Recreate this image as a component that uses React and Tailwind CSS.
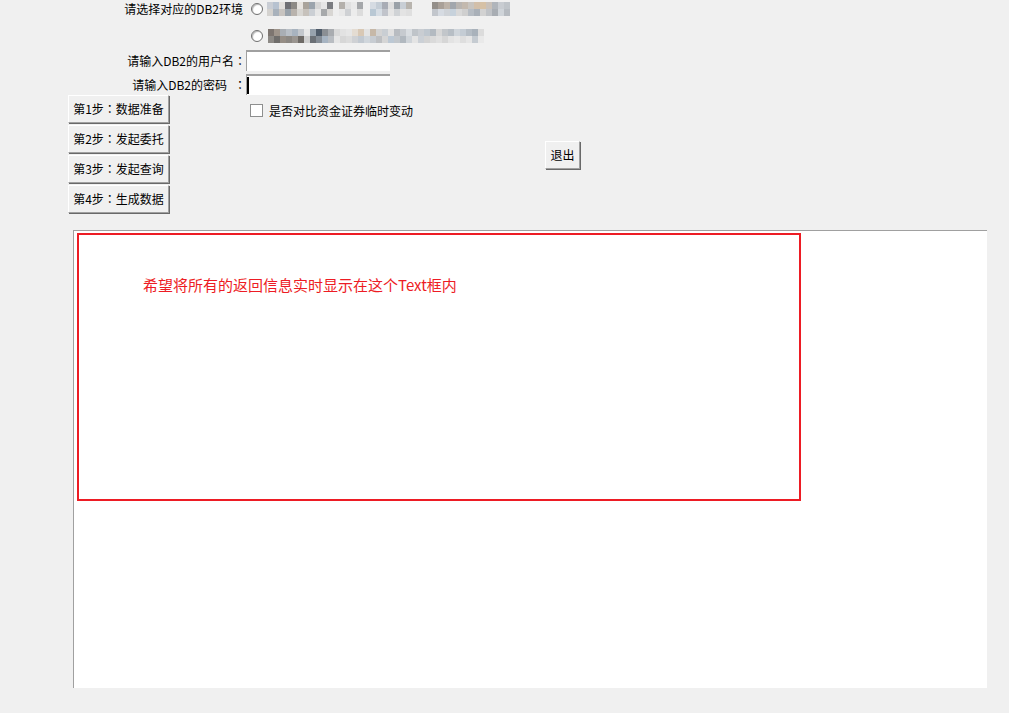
import React from 'react';

const blurRow1 = [
  ['#c9cdd4', '#d4d2cf'], ['#b7c2d0', '#a9b2bc'], ['#e2dfdc', '#c8c4c0'], ['#6f6f74', '#9aa3ab'],
  ['#8d8a86', '#b9b3ad'], ['#e7e4e0', '#d8d6d2'], ['#a9a39b', '#c7c2bc'], ['#9ba4ad', '#cbcfd4'],
  ['#d6d6d6', '#e6e6e6'], ['#e6e6e6', '#a7a9ab'], ['#7a7c80', '#d8d6d3'], ['#eeeeee', '#eeeeee'],
  ['#b4b0ab', '#e8e8e8'], ['#e0e0e0', '#cfd1d4'], ['#e9e9e9', '#ececec'], ['#a5a7aa', '#dcdcdc'],
];
const blurRow1b = [
  ['#d5dbe2', '#b9c8d4'], ['#c4cdd6', '#d6dde4'], ['#a8acb5', '#c1c4cb'], ['#dedede', '#e5e5e5'],
  ['#9aa1a8', '#d0d3d6'], ['#c8ced5', '#e3e3e3'], ['#b8b4ae', '#dfdfdf'],
];
const blurRow1c = [
  ['#948f8a', '#c2c6cc'], ['#a9a098', '#d6dbe2'], ['#bcb2a8', '#cfd3d8'], ['#a2a7ad', '#c7d2dc'],
  ['#b9b5b1', '#d9d9d9'], ['#c3b9ae', '#cfcfcf'], ['#c8c4bf', '#b6bcc3'], ['#d2bfa9', '#a9b0b8'],
  ['#d6c1a5', '#d2d2d2'], ['#c9c1b9', '#c0c3c7'], ['#b0b5bb', '#a8adb3'], ['#c8ccd1', '#cfd4d9'],
  ['#bfc4c9', '#b6bbc1'],
];
const blurRow2 = [
  ['#7d7570', '#8d8a86'], ['#9e948b', '#6f6d6b'], ['#a9aeb4', '#968e86'], ['#b9bfc6', '#8c8883'],
  ['#a8b3bf', '#9a9590'], ['#c3c7cc', '#6e6a66'], ['#e8e8e8', '#d0d0d0'], ['#97a2ad', '#6b7076'],
  ['#4f5b69', '#858d96'], ['#8b8f94', '#a7b4c2'], ['#a9acb0', '#b9bdc2'], ['#d9d9d9', '#e6e6e6'],
  ['#e2e2e2', '#d7d7d7'], ['#e6e6e6', '#dcdcdc'], ['#e4dcd2', '#cfd1d4'], ['#d8c8b5', '#c2c9d1'],
  ['#e3e3e3', '#d0d6dc'], ['#c6b8a8', '#c7ccd2'], ['#d3d3d3', '#bdbfc2'], ['#c9ced3', '#d5d5d5'],
  ['#e0e0e0', '#bcc8d4'], ['#b8bcc1', '#c2c7cc'], ['#c6cacf', '#b1b8bf'], ['#d9dde1', '#cfd4d9'],
  ['#bfc4c9', '#e4e4e4'], ['#c9cdd2', '#cbd0d6'], ['#bfc7cf', '#d3d3d3'], ['#b3bac1', '#dadada'],
  ['#d7d7d7', '#e0e0e0'], ['#c2c6ca', '#d6d6d6'], ['#b7bec5', '#e3e3e3'], ['#cfd5db', '#e8e8e8'],
  ['#c4ccd4', '#dedede'], ['#b5bdc5', '#e6e6e6'], ['#a9b2bb', '#c5cbd1'], ['#dcdcdc', '#e9e9e9'],
];

function Mosaic({ cells, className = '' }) {
  return (
    <div className={`flex ${className}`}>
      {cells.map((c, i) => (
        <div key={i} className="flex flex-col">
          <div className="w-[6px] h-[7px]" style={{ backgroundColor: c[0] }} />
          <div className="w-[6px] h-[7px]" style={{ backgroundColor: c[1] }} />
        </div>
      ))}
    </div>
  );
}

function Radio() {
  return (
    <div className="w-[12px] h-[12px] rounded-full border border-[#6f6f6f] bg-white shadow-[inset_1px_1px_1px_#b8b8b8]" />
  );
}

// fullwidth colon centred in its box, as the Windows font draws it
function Colon() {
  return <span style={{ fontFamily: '"Noto Sans CJK TC", sans-serif' }}>：</span>;
}

function WinButton({ children, className = '' }) {
  return (
    <div
      className={`flex items-center justify-center bg-[#f0f0f0] border-t border-l border-white border-r border-b border-r-[#a0a0a0] border-b-[#a0a0a0] shadow-[1px_1px_0_#696969] text-black ${className}`}
    >
      {children}
    </div>
  );
}

export default function App() {
  const steps = [
    ['第1步', '数据准备'],
    ['第2步', '发起委托'],
    ['第3步', '发起查询'],
    ['第4步', '生成数据'],
  ];

  return (
    <div
      className="w-[1009px] h-[713px] bg-[#f0f0f0] overflow-hidden text-[12px] leading-[16px] text-black flex flex-col"
      style={{ fontFamily: '"Noto Sans CJK SC", "Noto Sans", sans-serif' }}
    >
      {/* environment choice */}
      <div className="flex items-center h-[18px]">
        <span className="w-[243px] text-right">请选择对应的DB2环境</span>
        <div className="ml-[8px]"><Radio /></div>
        <Mosaic cells={blurRow1} className="ml-[4px]" />
        <Mosaic cells={blurRow1b} className="ml-[7px]" />
        <Mosaic cells={blurRow1c} className="ml-[20px]" />
      </div>
      <div className="flex items-center h-[18px] mt-[9px]">
        <div className="ml-[251px]"><Radio /></div>
        <Mosaic cells={blurRow2} className="ml-[5px]" />
      </div>

      {/* credentials */}
      <div className="flex items-center h-[21px] mt-[5px]">
        <span className="w-[246px] text-right">请输入DB2的用户名<Colon /></span>
        <div className="w-[144px] h-[21px] bg-white border-t-2 border-l border-[#a0a0a0]" />
      </div>
      <div className="flex items-center h-[21px] mt-[3px]">
        <span className="w-[246px] text-right">请输入DB2的密码<span className="ml-[7px]"><Colon /></span></span>
        <div className="w-[144px] h-[21px] bg-white border-t-2 border-l border-[#a0a0a0] flex items-start">
          <div className="w-[2px] h-[17px] bg-black mt-[1px]" />
        </div>
      </div>

      {/* steps + options */}
      <div className="flex">
        <div className="flex flex-col gap-[2px] ml-[68px] w-[101px]">
          {steps.map(([a, b]) => (
            <WinButton key={a} className="h-[28px]">{a}<Colon />{b}</WinButton>
          ))}
        </div>
        <div className="flex flex-col">
          <div className="flex items-center h-[13px] mt-[9px] ml-[81px]">
            <div className="w-[13px] h-[13px] bg-white border border-[#8e8f8f]" />
            <span className="ml-[6px]">是否对比资金证券临时变动</span>
          </div>
          <WinButton className="w-[35px] h-[28px] mt-[24px] ml-[376px]">退出</WinButton>
        </div>
      </div>

      {/* output text area */}
      <div className="ml-[73px] mt-[17px] w-[914px] h-[458px] bg-white border-t border-l border-[#a0a0a0] pl-[3px] pt-[2px]">
        <div className="w-[724px] h-[268px] border-2 border-[#ed1c24] pl-[64px] pt-[40px]">
          <span className="text-[15px] leading-[20px] text-[#ed1c24]">希望将所有的返回信息实时显示在这个Text框内</span>
        </div>
      </div>
    </div>
  );
}
